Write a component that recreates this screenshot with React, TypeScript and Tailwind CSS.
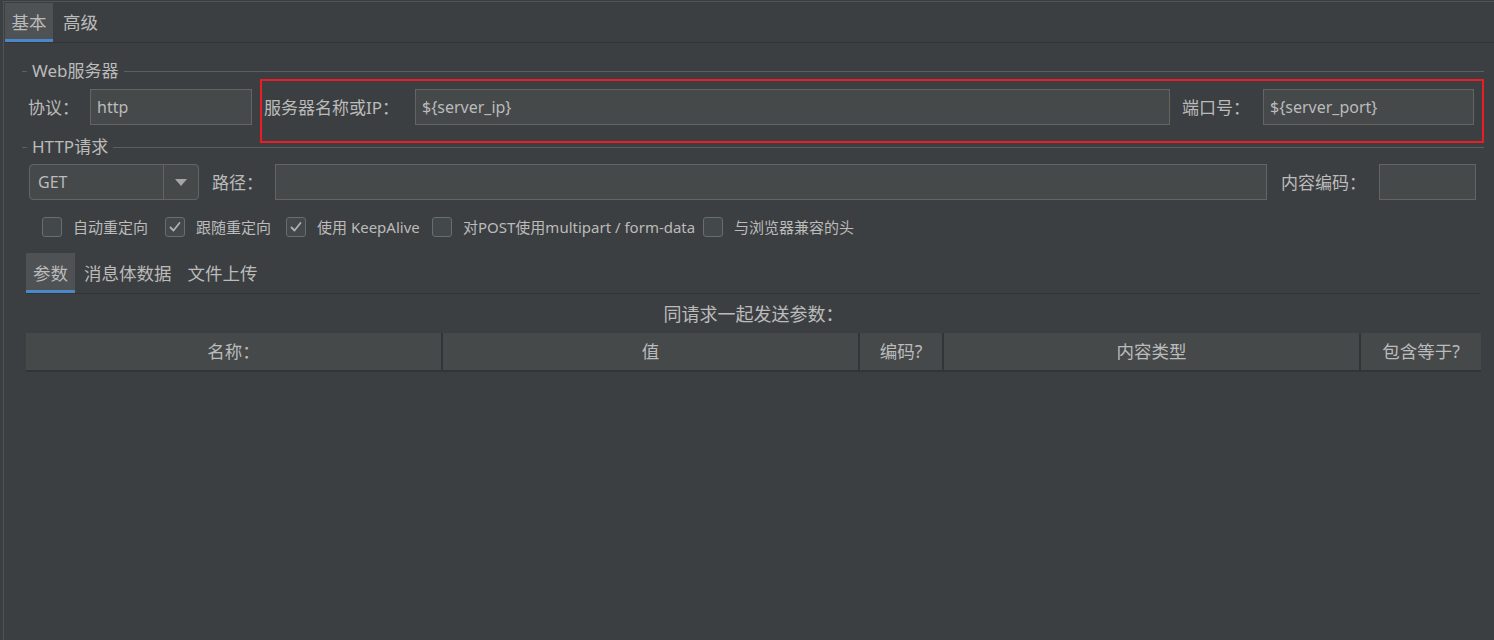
import React from "react";

function TextField({ value = "", className = "" }: { value?: string; className?: string }) {
  return (
    <div
      className={`h-[36px] flex items-center px-[6px] bg-[#45494a] border border-[#646464] text-[16px] leading-none text-[#bbbbbb] ${className}`}
    >
      {value}
    </div>
  );
}

function TitledSection({ title }: { title: string }) {
  return (
    <div className="flex items-center h-[18px]">
      <div className="w-[5px] h-px bg-[#5c5f61]" />
      <span className="px-[5px] text-[17px] leading-[18px] text-[#bbbbbb]">{title}</span>
      <div className="flex-1 h-px bg-[#5c5f61]" />
    </div>
  );
}

function CheckBox({ label, checked, className = "" }: { label: string; checked?: boolean; className?: string }) {
  return (
    <div className={`flex items-center ${className}`}>
      <div className="w-[20px] h-[20px] rounded-[3px] border border-[#6a6d6f] bg-[#43484a] flex items-center justify-center">
        {checked && (
          <svg width="14" height="14" viewBox="0 0 14 14" fill="none">
            <path d="M2.5 7.5 L5.5 10.5 L11.5 3" stroke="#b0b0b0" strokeWidth="1.8" strokeLinecap="round" strokeLinejoin="round" />
          </svg>
        )}
      </div>
      <span className="ml-[11px] text-[15px] leading-none whitespace-nowrap">{label}</span>
    </div>
  );
}

const columns = [
  { name: "名称：", width: "w-[415px]" },
  { name: "值", width: "w-[415px]" },
  { name: "编码?", width: "w-[82px]" },
  { name: "内容类型", width: "w-[415px]" },
  { name: "包含等于?", width: "flex-1" },
];

export default function App() {
  return (
    <div className="w-[1494px] h-[640px] overflow-hidden bg-[#3c3f41] text-[#bbbbbb] font-['Noto_Sans','Noto_Sans_CJK_SC',sans-serif] pt-[1px] pl-[3px]">
      <div className="h-full border-t border-l border-[#515456] pt-[1px] pl-[1px] flex flex-col">
        {/* top tabs */}
        <div className="h-[40px] flex border-b border-[#313335]">
          <div className="w-[48px] h-full bg-[#4e5254] border-b-[3px] border-[#4a88c7] flex items-center justify-center text-[17.5px] leading-none pt-[4px]">
            基本
          </div>
          <div className="px-[10px] h-full flex items-center text-[17.5px] leading-none pt-[1px]">高级</div>
        </div>

        <div className="ml-[17px] mr-[10px] flex flex-col">
          <div className="mt-[19px]">
            <TitledSection title="Web服务器" />
          </div>

          {/* server row */}
          <div className="relative mt-[9px] flex items-center">
            <span className="ml-[6px] w-[62px] text-[17px] leading-none">协议：</span>
            <TextField value="http" className="w-[162px]" />
            <span className="ml-[12px] w-[151px] text-[17px] leading-none whitespace-nowrap">服务器名称或IP：</span>
            <TextField value="${server_ip}" className="flex-1" />
            <span className="ml-[12px] w-[81px] text-[17px] leading-none">端口号：</span>
            <TextField value="${server_port}" className="w-[211px]" />
            <div className="w-[10px]" />
            <div className="absolute left-[238px] right-0 -top-[10px] -bottom-[18px] border-2 border-[#ec1c24] pointer-events-none" />
          </div>

          <div className="mt-[13px]">
            <TitledSection title="HTTP请求" />
          </div>

          {/* method / path row */}
          <div className="mt-[8px] flex items-center">
            <div className="ml-[7px] w-[170px] h-[36px] flex rounded-[4px] border border-[#646464] bg-[#45494a]">
              <div className="flex-1 flex items-center pl-[8px] text-[16px] leading-none border-r border-[#646464]">GET</div>
              <div className="w-[34px] flex items-center justify-center">
                <svg width="12" height="7" viewBox="0 0 12 7">
                  <path d="M0 0 H12 L6 7 Z" fill="#a6a6a6" />
                </svg>
              </div>
            </div>
            <span className="ml-[13px] w-[63px] text-[17px] leading-none">路径：</span>
            <TextField className="flex-1" />
            <span className="ml-[14px] w-[98px] text-[17px] leading-none">内容编码：</span>
            <TextField className="w-[97px]" />
            <div className="w-[8px]" />
          </div>

          {/* options */}
          <div className="mt-[17px] ml-[20px] flex items-center h-[20px]">
            <CheckBox label="自动重定向" className="w-[123px]" />
            <CheckBox label="跟随重定向" checked className="w-[121px]" />
            <CheckBox label="使用 KeepAlive" checked className="w-[146px]" />
            <CheckBox label="对POST使用multipart / form-data" className="w-[271px]" />
            <CheckBox label="与浏览器兼容的头" />
          </div>

          {/* parameter tabs */}
          <div className="mt-[16px] ml-[4px] mr-[3px] flex flex-col">
            <div className="h-[41px] flex border-b border-[#313335]">
              <div className="w-[49px] h-full bg-[#4e5254] border-b-[3px] border-[#4a88c7] flex items-center justify-center text-[17.5px] leading-none pt-[4px]">
                参数
              </div>
              <div className="pl-[9px] pr-[8px] h-full flex items-center text-[17.5px] leading-none pt-[1px]">消息体数据</div>
              <div className="px-[8px] h-full flex items-center text-[17.5px] leading-none pt-[1px]">文件上传</div>
            </div>

            <div className="h-[39px] flex items-center justify-center text-[18px] leading-none">同请求一起发送参数：</div>

            <div className="h-[39px] flex gap-[2px] bg-[#323537] pb-[2px]">
              {columns.map((c) => (
                <div
                  key={c.name}
                  className={`${c.width} bg-[#45494a] flex items-center justify-center text-[17.5px] leading-none pt-[1px]`}
                >
                  {c.name}
                </div>
              ))}
            </div>
          </div>
        </div>
      </div>
    </div>
  );
}
